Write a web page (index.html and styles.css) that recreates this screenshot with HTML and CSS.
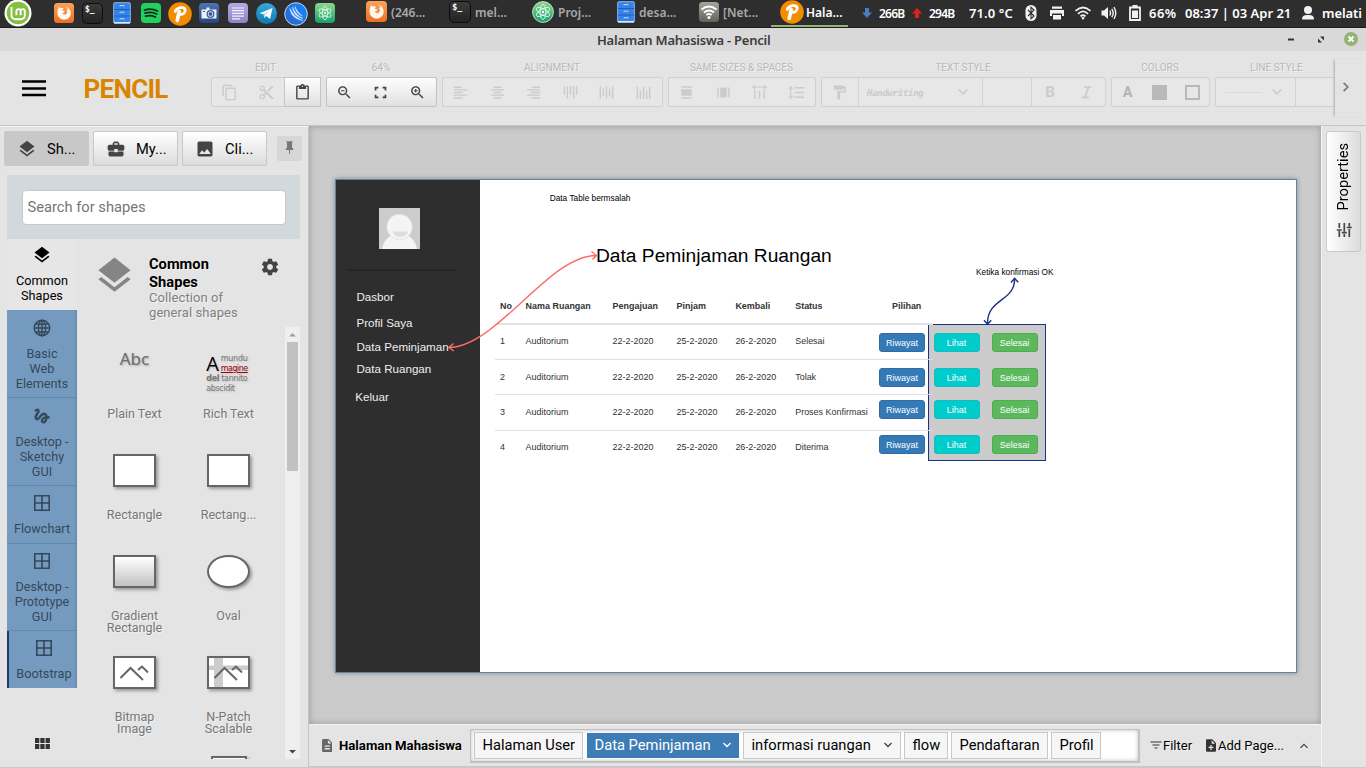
FILE: index.html
```html
<!DOCTYPE html>
<html lang="id">
<head>
<meta charset="utf-8">
<title>Halaman Mahasiswa - Pencil</title>
<link rel="stylesheet" href="styles.css">
</head>
<body>
<svg class="sprite" aria-hidden="true">
  <defs>
    <linearGradient id="g-orange" x1="0" y1="0" x2="0" y2="1"><stop offset="0" stop-color="#fba35a"/><stop offset="1" stop-color="#ee6e22"/></linearGradient>
    <linearGradient id="g-dark" x1="0" y1="0" x2="0" y2="1"><stop offset="0" stop-color="#3c3c3c"/><stop offset="1" stop-color="#222"/></linearGradient>
    <linearGradient id="g-atom" x1="0" y1="0" x2="0" y2="1"><stop offset="0" stop-color="#8ed88c"/><stop offset="1" stop-color="#15a06f"/></linearGradient>
    <linearGradient id="g-tele" x1="0" y1="0" x2="0" y2="1"><stop offset="0" stop-color="#35aadf"/><stop offset="1" stop-color="#0e78b4"/></linearGradient>
    <linearGradient id="g-purple" x1="0" y1="0" x2="0" y2="1"><stop offset="0" stop-color="#b3a9e2"/><stop offset="1" stop-color="#8f83c4"/></linearGradient>
    <linearGradient id="g-camera" x1="0" y1="0" x2="0" y2="1"><stop offset="0" stop-color="#4d74b4"/><stop offset="1" stop-color="#24487f"/></linearGradient>
    <linearGradient id="g-net" x1="0" y1="0" x2="0" y2="1"><stop offset="0" stop-color="#a5a59d"/><stop offset="1" stop-color="#62625c"/></linearGradient>
    <linearGradient id="g-blue" x1="0" y1="1" x2="1" y2="0"><stop offset="0" stop-color="#2f5fd0"/><stop offset="1" stop-color="#0d8cff"/></linearGradient>
  </defs>
  <symbol id="i-firefox" viewBox="0 0 20 20"><rect width="20" height="20" rx="3.500" fill="url(#g-orange)"/><path d="M3.400 10C3.400 7.500 4 5 5.500 3.600c0 1 .4 1.500 1 1.700 1-.5 2-.5 3 0L8.300 7.600l2.700.6-1.200 1.600-1.600.3c.8 1.500 2.600 1.800 4 .8 1.600-1.200 1.400-3.400-.4-4.400 1-.3 1.700 0 2.200.4-.2-1.400-1.100-2.400-2.200-3 3.200.5 5 3.200 5 6.300 0 3.700-2.900 6.500-6.700 6.500S3.400 13.800 3.400 10z" fill="#fff6ee"/></symbol>
  <symbol id="i-cabinet" viewBox="0 0 18 22"><rect x=".7" y=".7" width="16.600" height="20.600" rx="1" fill="#3583e8" stroke="#88b8f2"/><path d="M1 7.500h16M1 14h16" stroke="#1c60bd"/><path d="M7 4.500v-1h4v1M7 11.200v-1h4v1M7 17.700v-1h4v1" stroke="#b8d5fa" fill="none"/><path d="M1 20.700h16" stroke="#e6edf6" stroke-width="1.300"/></symbol>
  <symbol id="i-pencil" viewBox="0 0 24 24"><circle cx="12" cy="12" r="11.800" fill="#f48c00"/><path d="M9.200 18.500 11.200 9.500" fill="none" stroke="#fff" stroke-width="3.600" stroke-linecap="round"/><path d="M7.200 9.500C8.500 5.500 16.500 3.800 17.200 8c.4 3-2.600 4.800-5.200 4.300" fill="none" stroke="#fff" stroke-width="2.800" stroke-linecap="round"/></symbol>
  <symbol id="i-atom" viewBox="0 0 20 20"><rect width="20" height="20" rx="4" fill="url(#g-atom)"/><use href="#i-orbits"/></symbol>
  <symbol id="i-atomround" viewBox="0 0 20 20"><circle cx="10" cy="10" r="9.500" fill="url(#g-atom)" stroke="#c9e9da" stroke-width=".8"/><use href="#i-orbits"/></symbol>
  <symbol id="i-orbits" viewBox="0 0 20 20"><g fill="none" stroke="#e4fbec" stroke-width=".8"><ellipse cx="10" cy="10" rx="2.700" ry="6.800"/><ellipse cx="10" cy="10" rx="2.700" ry="6.800" transform="rotate(60 10 10)"/><ellipse cx="10" cy="10" rx="2.700" ry="6.800" transform="rotate(120 10 10)"/></g><circle cx="10" cy="10" r="1.100" fill="#fff"/></symbol>
  <symbol id="i-layers" viewBox="0 0 24 24"><path d="M11.990 18.540l-7.370-5.730L3 14.070l9 7 9-7-1.630-1.270-7.380 5.740zM12 16l7.360-5.730L21 9l-9-7-9 7 1.630 1.270L12 16z"/></symbol>
  <symbol id="i-window" viewBox="0 0 18 18"><path d="M1.800 1.800h14.400v14.400H1.800zM9 2v14M2 9h14" fill="none" stroke="currentColor" stroke-width="1.600"/></symbol>
  <symbol id="i-down" viewBox="0 0 10 10"><path d="M1.500 3 5 6.500 8.500 3" fill="none" stroke="currentColor" stroke-width="1.400"/></symbol>
</svg>

<header class="taskbar">
  <svg class="ic mint" viewBox="0 0 28 28"><circle cx="14" cy="14" r="13.500" fill="#fff"/><circle cx="14" cy="14" r="11.300" fill="#84bf41"/><path d="M7.500 8v8.200a4 4 0 0 0 4 4h5.300a4 4 0 0 0 4-4v-4a2.100 2.100 0 0 0-4.200 0v4M16.600 12.200a2.100 2.100 0 0 0-4.200 0v4" fill="none" stroke="#fff" stroke-width="1.900"/></svg>
  <svg class="ic s20"><use href="#i-firefox"/></svg>
  <svg class="ic s21" viewBox="0 0 21 21"><rect x=".5" y=".5" width="20" height="20" rx="4" fill="url(#g-dark)" stroke="#0c0c0c"/><text x="3" y="9" class="term-text">$_</text></svg>
  <svg class="ic cab"><use href="#i-cabinet"/></svg>
  <svg class="ic s20" viewBox="0 0 20 20"><rect width="20" height="20" rx="4" fill="#20d160"/><path d="M3.500 7.100c4.500-1.500 9-1.100 13 .9M4 10.200c4-1.200 8-.9 11.600.8M4.600 13.200c3.500-.9 6.700-.6 9.800.8" fill="none" stroke="#0e2b18" stroke-width="1.800" stroke-linecap="round"/></svg>
  <svg class="ic s24"><use href="#i-pencil"/></svg>
  <svg class="ic s20" viewBox="0 0 20 20"><rect width="20" height="20" rx="4" fill="url(#g-camera)"/><path d="M2.500 6.500h5V4.500h3v2h7v9h-15z" fill="#edf1f8"/><circle cx="11.500" cy="11" r="3.300" fill="#edf1f8" stroke="#345b98" stroke-width="1.300"/><rect x="9.700" y="9.200" width="3.500" height="3.500" rx="1" fill="#345b98"/><path d="M4 8.500h2" stroke="#345b98"/></svg>
  <svg class="ic s20" viewBox="0 0 20 20"><rect width="20" height="20" rx="4" fill="url(#g-purple)"/><path d="M4 5h12M4 7.700h12M4 10.400h12M4 13.100h12M4 15.800h8" stroke="#f5f2ff" stroke-width="1.200"/></svg>
  <svg class="ic s21" viewBox="0 0 21 21"><circle cx="10.500" cy="10.500" r="10.500" fill="url(#g-tele)"/><path d="M3.500 10.200 16.500 5l-2.400 11-4-3-2 2-.4-3.700z" fill="#fff"/><path d="m7.700 11.300 6-4.200-4.500 5.200-1 2.500z" fill="#b8d8ea"/></svg>
  <svg class="ic s24" viewBox="0 0 24 24"><circle cx="12" cy="12" r="11.300" fill="url(#g-blue)" stroke="#c3d3ea" stroke-width="1"/><path d="M6 6.500C6.500 13 11 17 18.500 18.500 12.500 16 8.500 12 6 6.500zM8.500 5c.5 6 4 10 10.500 11.500C14 14 10.500 10.500 8.500 5zM11 4.500c.5 4.500 3 8 7.500 9.500C15 11.500 12.500 8.500 11 4.500z" fill="#d8e9ff" stroke="#d8e9ff" stroke-width=".5"/></svg>
  <svg class="ic s20"><use href="#i-atom"/></svg>
  <div class="task"><svg class="ic s21"><use href="#i-firefox"/></svg>(246...</div>
  <div class="task"><svg class="ic s22" viewBox="0 0 21 21"><rect x=".5" y=".5" width="20" height="20" rx="4" fill="url(#g-dark)" stroke="#0c0c0c"/><text x="3" y="9" class="term-text">$_</text></svg>mel...</div>
  <div class="task"><svg class="ic s22"><use href="#i-atomround"/></svg>Proj...</div>
  <div class="task"><svg class="ic cab"><use href="#i-cabinet"/></svg>desa...</div>
  <div class="task"><svg class="ic s20" viewBox="0 0 20 20"><rect width="20" height="20" rx="3.500" fill="url(#g-net)"/><path d="M2.500 7.500Q10 1.500 17.500 7.500M5 10.500Q10 6.500 15 10.500M7.300 13Q10 11 12.700 13" fill="none" stroke="#fff" stroke-width="2"/><circle cx="10" cy="15.500" r="1.600" fill="#fff"/></svg>[Net...</div>
  <div class="task current"><svg class="ic s24"><use href="#i-pencil"/></svg>Hala...</div>
  <svg class="arrow" viewBox="0 0 10 10"><path d="M3 0h4v4.500h3L5 10 0 4.500h3z" fill="#4b7cc0"/></svg>
  <span class="tray small">266B</span>
  <svg class="arrow" viewBox="0 0 10 10"><path d="M3 10h4V5.500h3L5 0 0 5.500h3z" fill="#e02020"/></svg>
  <span class="tray small">294B</span>
  <span class="tray temp">71.0 °C</span>
  <svg class="ti" viewBox="0 0 16 16"><rect x="2.500" y="0" width="11" height="16" rx="5.500" fill="#f2f2f2"/><path d="m5 5 6 6-3 2.700V2.300L11 5l-6 6" fill="none" stroke="#2e2e2e" stroke-width="1.100"/></svg>
  <svg class="ti" viewBox="0 0 16 16"><path d="M3 1.500h10v2.300H3zM1 5h14v6h-2V8.500H3V11H1zM4 10h8v4.500H4z" fill="#f2f2f2"/></svg>
  <svg class="ti" viewBox="0 0 16 16"><path d="M.5 6Q8-1 15.500 6M3 8.800Q8 4 13 8.800M5.500 11.300Q8 9.200 10.500 11.300" fill="none" stroke="#f2f2f2" stroke-width="1.700"/><path d="M6.200 12.500Q8 11.500 9.800 12.500L8 15z" fill="#f2f2f2"/></svg>
  <svg class="ti" viewBox="0 0 16 16"><path d="M.5 5.500H3L7 2v12L3 10.500H.5z" fill="#f2f2f2"/><path d="M8.800 5.500q1.500 2.500 0 5M10.800 3.800q2.800 4.200 0 8.400M13 2q3.500 6 0 12" fill="none" stroke="#f2f2f2" stroke-width="1.400"/></svg>
  <svg class="ti" viewBox="0 0 16 16"><path d="M3 2.500h10V15H3zM5.500 1h5" fill="none" stroke="#f2f2f2" stroke-width="1.800"/><path d="M5 5.500h6V13H5z" fill="#f2f2f2"/></svg>
  <span class="tray pct">66%</span>
  <span class="tray clock">08:37 | 03 Apr 21</span>
  <svg class="ti" viewBox="0 0 16 16"><circle cx="8" cy="5" r="4" fill="#f2f2f2"/><path d="M2 14.500c0-4 2.500-4.500 6-4.500s6 .5 6 4.500z" fill="#f2f2f2"/></svg>
  <span class="tray user">melati</span>
</header>

<div class="titlebar">
  <span class="wtitle">Halaman Mahasiswa - Pencil</span>
  <svg class="wbtns" viewBox="0 0 80 23"><path d="M1 11.500H7" stroke="#333" stroke-width="2"/><path d="M33 8.500h4v4zM31 10.500v4h4z" fill="#333"/><circle cx="64" cy="11" r="7" fill="#93b374"/><path d="m61.500 8.500 5 5m0-5-5 5" stroke="#fff" stroke-width="2"/></svg>
</div>

<div class="toolbar">
  <svg class="burger" viewBox="0 0 24 17"><path d="M0 1.500h24M0 8.500h24M0 15h24" stroke="#000" stroke-width="2.400"/></svg>
  <div class="brand">PENCIL</div>
  <div class="groups">
    <div class="group edit"><div class="glabel">EDIT</div><div class="gbox off">
      <span class="cell"><svg viewBox="0 0 24 24"><path d="M16 1H4c-1.100 0-2 .9-2 2v14h2V3h12V1zm3 4H8c-1.100 0-2 .9-2 2v14c0 1.100.9 2 2 2h11c1.100 0 2-.9 2-2V7c0-1.100-.9-2-2-2zm0 16H8V7h11v14z"/></svg></span>
      <span class="cell"><svg viewBox="0 0 24 24"><path d="M9.640 7.640c.23-.5.36-1.050.36-1.640 0-2.210-1.790-4-4-4S2 3.790 2 6s1.790 4 4 4c.59 0 1.140-.13 1.640-.36L10 12l-2.360 2.360C7.140 14.130 6.590 14 6 14c-2.210 0-4 1.790-4 4s1.790 4 4 4 4-1.790 4-4c0-.59-.13-1.140-.36-1.640L12 14l7 7h3v-1L9.640 7.640zM6 8c-1.100 0-2-.89-2-2s.9-2 2-2 2 .89 2 2-.9 2-2 2zm0 12c-1.100 0-2-.89-2-2s.9-2 2-2 2 .89 2 2-.9 2-2 2zM19 3l-6 6 2 2 7-7V3z"/></svg></span>
      <span class="cell live"><svg viewBox="0 0 24 24"><path d="M19 2h-4.180C14.400.84 13.300 0 12 0c-1.300 0-2.400.84-2.820 2H5c-1.100 0-2 .9-2 2v16c0 1.100.9 2 2 2h14c1.100 0 2-.9 2-2V4c0-1.100-.9-2-2-2zm-7 0c.55 0 1 .45 1 1s-.45 1-1 1-1-.45-1-1 .45-1 1-1zm7 18H5V4h2v3h10V4h2v16z"/></svg></span>
    </div></div>
    <div class="group zoom"><div class="glabel">64%</div><div class="gbox on">
      <span class="cell"><svg viewBox="0 0 24 24"><path d="M15.500 14h-.79l-.28-.27C15.410 12.590 16 11.110 16 9.500 16 5.910 13.090 3 9.500 3S3 5.910 3 9.500 5.910 16 9.500 16c1.610 0 3.090-.59 4.230-1.570l.27.28v.79l5 4.990L20.490 19l-4.990-5zm-6 0C7.010 14 5 11.990 5 9.500S7.010 5 9.500 5 14 7.010 14 9.500 11.990 14 9.500 14zM7 8.700h5v1.600H7z"/></svg></span>
      <span class="cell"><svg viewBox="0 0 24 24"><path d="M5 9V5h4M15 5h4v4M19 15v4h-4M9 19H5v-4" fill="none" stroke="currentColor" stroke-width="2.400"/></svg></span>
      <span class="cell"><svg viewBox="0 0 24 24"><path d="M15.500 14h-.79l-.28-.27C15.410 12.590 16 11.110 16 9.500 16 5.910 13.090 3 9.500 3S3 5.910 3 9.500 5.910 16 9.500 16c1.610 0 3.090-.59 4.230-1.570l.27.28v.79l5 4.990L20.490 19l-4.990-5zm-6 0C7.010 14 5 11.990 5 9.500S7.010 5 9.500 5 14 7.010 14 9.500 11.990 14 9.500 14zM7 8.700h5v1.600H7zM8.700 7h1.600v5H8.700z"/></svg></span>
    </div></div>
    <div class="group align"><div class="glabel">ALIGNMENT</div><div class="gbox off">
      <span class="cell"><svg viewBox="0 0 18 18"><path d="M2 3.500h8M2 6.200h14M2 9h9M2 11.800h14M2 14.800h9" class="ln"/></svg></span>
      <span class="cell"><svg viewBox="0 0 18 18"><path d="M5 3.500h8M2 6.200h14M5 9h8M2 11.800h14M5 14.800h8" class="ln"/></svg></span>
      <span class="cell"><svg viewBox="0 0 18 18"><path d="M7 3.500h9M2 6.200h14M6 9h10M2 11.800h14M7 14.800h9" class="ln"/></svg></span>
      <span class="cell"><svg viewBox="0 0 18 18"><path d="M2.500 2.500v9M5.700 2.500v13M9 2.500v9M12.300 2.500v13M15.500 2.500v9" class="ln"/></svg></span>
      <span class="cell"><svg viewBox="0 0 18 18"><path d="M2.500 2.500v13M5.700 5v8M9 2.500v13M12.300 5v8M15.500 2.500v13" class="ln"/></svg></span>
      <span class="cell"><svg viewBox="0 0 18 18"><path d="M2.500 3v13M5.700 7v9M9 3v13M12.300 7v9M15.500 3v13" class="ln"/></svg></span>
    </div></div>
    <div class="group same"><div class="glabel">SAME SIZES &amp; SPACES</div><div class="gbox off">
      <span class="cell"><svg viewBox="0 0 18 18"><path d="M3.500 5.500h11v7h-11z"/><path d="M3.500 3.200h11M3.500 14.800h11" class="ln"/></svg></span>
      <span class="cell"><svg viewBox="0 0 18 18"><path d="M5.500 3.700h7v10.600h-7z"/><path d="M3.200 3.700v10.600M14.800 3.700v10.600" class="ln"/></svg></span>
      <span class="cell"><svg viewBox="0 0 18 18"><path d="M4 7v9M9 7v9M14 7v9" class="ln"/><path d="M4.500 1.300 2 3.500l2.500 2.200M13.500 1.300 16 3.500l-2.500 2.200M2 3.500h14" class="ln thin"/></svg></span>
      <span class="cell"><svg viewBox="0 0 18 18"><path d="M7 4h10M7 9h10M7 14h10" class="ln"/><path d="M.8 5.500 3 3l2.200 2.500M.8 12.500 3 15l2.200-2.500M3 3v12" class="ln thin"/></svg></span>
    </div></div>
    <div class="group text"><div class="glabel">TEXT STYLE</div><div class="gbox off">
      <span class="cell"><svg viewBox="0 0 24 24"><path d="M18 4V3c0-.55-.45-1-1-1H5c-.55 0-1 .45-1 1v4c0 .55.45 1 1 1h12c.55 0 1-.45 1-1V6h1v4H9v11c0 .55.45 1 1 1h2c.55 0 1-.45 1-1v-9h8V4h-3z"/></svg></span>
      <span class="cell font"><i>Handwriting</i><svg><use href="#i-down"/></svg></span>
      <span class="cell size"></span>
      <span class="cell biu">B</span>
      <span class="cell"><svg viewBox="0 0 24 24"><path d="M9 4.500h10M5 19h10M14.500 5l-4.500 14" fill="none" stroke="currentColor" stroke-width="2.600"/></svg></span>
    </div></div>
    <div class="group color"><div class="glabel">COLORS</div><div class="gbox off colors">
      <span class="cell">A</span><span class="cell"><b class="fill"></b></span><span class="cell"><b class="hollow"></b></span>
    </div></div>
    <div class="group"><div class="glabel">LINE STYLE</div><div class="gbox off">
      <span class="cell stroke"><i></i><svg><use href="#i-down"/></svg></span><span class="cell width"></span>
    </div></div>
  </div>
  <div class="more"><svg viewBox="0 0 10 10"><path d="M3 1.500 6.500 5 3 8.500" fill="none" stroke="#777" stroke-width="1.400"/></svg></div>
</div>

<main class="main">
  <aside class="left">
    <div class="tabs">
      <div class="tab sel"><svg><use href="#i-layers"/></svg>Sh...</div>
      <div class="tab"><svg viewBox="0 0 24 24"><path d="M10 16v-1H3.010L3 19c0 1.110.89 2 2 2h14c1.110 0 2-.89 2-2v-4h-7v1h-4zm10-9h-4.010V5l-2-2h-4l-2 2v2H4c-1.100 0-2 .9-2 2v3c0 1.110.89 2 2 2h6v-2h4v2h6c1.100 0 2-.9 2-2V9c0-1.100-.9-2-2-2zm-6 0h-4V5h4v2z"/></svg>My...</div>
      <div class="tab"><svg viewBox="0 0 24 24"><path d="M21 19V5c0-1.100-.9-2-2-2H5c-1.100 0-2 .9-2 2v14c0 1.100.9 2 2 2h14c1.100 0 2-.9 2-2zM8.500 13.500l2.500 3.010L14.500 12l4.500 6H5l3.500-4.500z"/></svg>Cli...</div>
      <div class="pin"><svg viewBox="0 0 24 24"><path d="M16,12V4H17V2H7V4H8V12L6,14V16H11.200V22H12.800V16H18V14L16,12Z"/></svg></div>
    </div>
    <div class="search"><div class="field">Search for shapes</div></div>
    <div class="library">
      <nav class="cats">
        <div class="cat active"><svg><use href="#i-layers"/></svg>Common<br>Shapes</div>
        <div class="cat"><svg viewBox="0 0 18 18"><g fill="none" stroke="currentColor" stroke-width="1.400"><circle cx="9" cy="9" r="7.800"/><ellipse cx="9" cy="9" rx="3.600" ry="7.800"/><path d="M9 1v16M1 9h16M2.500 5h13M2.500 13h13"/></g></svg>Basic<br>Web<br>Elements</div>
        <div class="cat"><svg viewBox="1 1 22 22"><path d="M4.590 6.890c.7-.71 1.400-1.350 1.710-1.220.5.2 0 1.030-.3 1.520-.25.42-2.860 3.890-2.860 6.310 0 1.280.48 2.340 1.340 2.980.75.56 1.740.73 2.640.46 1.070-.31 1.950-1.400 3.060-2.770 1.210-1.490 2.830-3.440 4.080-3.440 1.630 0 1.650 1.010 1.760 1.790-3.780.64-5.380 3.670-5.380 5.370 0 1.700 1.440 3.090 3.210 3.090 1.630 0 4.290-1.330 4.690-6.100H21v-2.500h-2.470c-.15-1.650-1.090-4.200-4.030-4.200-2.250 0-4.180 1.910-4.940 2.840-.58.73-2.060 2.480-2.290 2.720-.25.3-.68.84-1.110.84-.45 0-.72-.83-.36-1.920.35-1.090 1.400-2.860 1.850-3.520.78-1.140 1.300-1.920 1.300-3.280C8.950 3.690 7.310 3 6.440 3 5.120 3 3.970 4 3.720 4.250c-.36.36-.66.66-.88.93l1.750 1.710zm9.290 11.660c-.31 0-.74-.26-.74-.72 0-.6.73-2.200 2.870-2.760-.3 2.690-1.430 3.480-2.130 3.480z" stroke="currentColor" stroke-width=".5"/></svg>Desktop -<br>Sketchy<br>GUI</div>
        <div class="cat short"><svg><use href="#i-window"/></svg>Flowchart</div>
        <div class="cat"><svg><use href="#i-window"/></svg>Desktop -<br>Prototype<br>GUI</div>
        <div class="cat marked"><svg><use href="#i-window"/></svg>Bootstrap</div>
        <svg class="apps" viewBox="0 0 15 11"><path d="M0 0h4.300v5H0zM5.300 0h4.300v5H5.300zM10.600 0h4.300v5h-4.300zM0 6h4.300v5H0zM5.300 6h4.300v5H5.300zM10.600 6h4.300v5h-4.300z"/></svg>
      </nav>
      <section class="shapes">
        <div class="head">
          <svg class="big"><use href="#i-layers"/></svg>
          <div class="desc"><h2>Common Shapes</h2><p>Collection of general shapes</p></div>
          <svg class="gear" viewBox="0 0 24 24"><path d="M19.430 12.980c.04-.32.07-.64.07-.98s-.03-.66-.07-.98l2.110-1.650c.19-.15.24-.42.12-.64l-2-3.460c-.12-.22-.39-.3-.61-.22l-2.490 1c-.52-.4-1.080-.73-1.690-.98l-.38-2.650C14.460 2.180 14.250 2 14 2h-4c-.25 0-.46.18-.49.42l-.38 2.650c-.61.25-1.170.59-1.690.98l-2.490-1c-.23-.09-.49 0-.61.22l-2 3.460c-.13.22-.07.49.12.64l2.110 1.650c-.04.32-.07.65-.07.98s.03.66.07.98l-2.110 1.650c-.19.15-.24.42-.12.64l2 3.460c.12.22.39.3.61.22l2.490-1c.52.4 1.080.73 1.690.98l.38 2.650c.03.24.24.42.49.42h4c.25 0 .46-.18.49-.42l.38-2.650c.61-.25 1.170-.59 1.690-.98l2.490 1c.23.09.49 0 .61-.22l2-3.460c.12-.22.07-.49-.12-.64l-2.110-1.650zM12 15.500c-1.930 0-3.500-1.570-3.500-3.500s1.570-3.500 3.500-3.500 3.500 1.570 3.500 3.500-1.570 3.500-3.500 3.500z"/></svg>
        </div>
        <div class="scroller">
          <div class="grid">
            <div class="shape"><div class="thumb plain">Abc</div>Plain Text</div>
            <div class="shape"><div class="thumb rich"><b>A</b><div><span>mundu</span><u>magine</u></div><p><strong>del</strong> tannito</p><p>abscidit</p></div>Rich Text</div>
            <div class="shape"><div class="thumb"><i class="rect"></i></div>Rectangle</div>
            <div class="shape"><div class="thumb"><i class="rect"></i></div>Rectang...</div>
            <div class="shape"><div class="thumb"><i class="rect grad"></i></div>Gradient<br>Rectangle</div>
            <div class="shape"><div class="thumb"><i class="rect oval"></i></div>Oval</div>
            <div class="shape"><div class="thumb"><i class="rect"><svg viewBox="0 0 39 29"><path d="M5.500 20 15.500 10 28 22M23 12l4-3.500 6 6" class="mt"/></svg></i></div>Bitmap<br>Image</div>
            <div class="shape"><div class="thumb"><i class="rect"><svg viewBox="0 0 39 29"><path d="M5 0h9v29H5zM0 7.500h39v4.500H0z" fill="#999" opacity=".5"/><path d="M5.500 20 15.500 10 28 22M23 12l4-3.500 6 6" class="mt"/></svg></i></div>N-Patch<br>Scalable</div>
            <div class="shape"></div>
            <div class="shape"><div class="thumb"><i class="rect narrow"></i></div></div>
          </div>
          <div class="bar"><svg viewBox="0 0 15 15"><path d="M4 9.500h7L7.500 6z" fill="#a0a0a0"/></svg><i></i><svg viewBox="0 0 15 15"><path d="M4 6h7L7.500 9.500z" fill="#444"/></svg></div>
        </div>
      </section>
    </div>
  </aside>

  <section class="center">
    <div class="stage">
      <div class="page">
        <div class="side">
          <svg class="avatar" viewBox="0 0 41 41"><rect width="41" height="41" fill="#ccc"/><path d="M3 41c2-11 9-15 17.500-15S36 30 38 41z" fill="#f4f4f4"/><circle cx="20.500" cy="19" r="12.800" fill="#f4f4f4" stroke="#dcdcdc" stroke-width=".6"/><path d="M13.500 23.500h15.500c-2 7-13.500 7-15.500 0z" fill="#ddd"/></svg>
          <hr>
          <ul><li>Dasbor</li><li>Profil Saya</li><li>Data Peminjaman</li><li>Data Ruangan</li><li>Keluar</li></ul>
        </div>
        <div class="note n1">Data Table bermsalah</div>
        <h1>Data Peminjaman Ruangan</h1>
        <div class="note n2">Ketika konfirmasi OK</div>
        <div class="panel"></div>
        <div class="table">
          <div class="tr th"><span>No</span><span>Nama Ruangan</span><span>Pengajuan</span><span>Pinjam</span><span>Kembali</span><span>Status</span><span>Pilihan</span></div>
          <div class="tr"><span>1</span><span>Auditorium</span><span>22-2-2020</span><span>25-2-2020</span><span>26-2-2020</span><span>Selesai</span></div>
          <div class="tr"><span>2</span><span>Auditorium</span><span>22-2-2020</span><span>25-2-2020</span><span>26-2-2020</span><span>Tolak</span></div>
          <div class="tr"><span>3</span><span>Auditorium</span><span>22-2-2020</span><span>25-2-2020</span><span>26-2-2020</span><span>Proses Konfirmasi</span></div>
          <div class="tr last"><span>4</span><span>Auditorium</span><span>22-2-2020</span><span>25-2-2020</span><span>26-2-2020</span><span>Diterima</span></div>
        </div>
        <div class="actions">
          <a class="blue">Riwayat</a><a class="cyan">Lihat</a><a class="green">Selesai</a>
          <a class="blue">Riwayat</a><a class="cyan">Lihat</a><a class="green">Selesai</a>
          <a class="blue">Riwayat</a><a class="cyan">Lihat</a><a class="green">Selesai</a>
          <a class="blue">Riwayat</a><a class="cyan">Lihat</a><a class="green">Selesai</a>
        </div>
        <svg class="links" viewBox="336 180 960 492">
          <g fill="none" stroke="#fd6c6c" stroke-width="1.400"><path d="M449 347.500C498 346 548 256 596 255.500M453.500 343.500l-4.700 4 5 3.500M591.500 251.500l5 4-4 4"/></g>
          <g fill="none" stroke="#1b3282" stroke-width="1.400"><path d="M1014.600 278.500C1015 302 987 298 987.500 324M1011 282.500l3.600-4.200 3.600 4M984 320.300l3.500 4 3.700-4"/></g>
        </svg>
      </div>
    </div>
    <footer class="pages">
      <svg class="doc" viewBox="4 2 16 20"><path d="M14 2H6c-1.100 0-1.990.9-1.990 2L4 20c0 1.100.89 2 1.990 2H18c1.100 0 2-.9 2-2V8l-6-6zm2 16H8v-2h8v2zm0-4H8v-2h8v2zm-3-5V3.500L18.500 9H13z"/></svg>
      <b class="parent">Halaman Mahasiswa</b>
      <div class="list">
        <span class="w1">Halaman User</span><span class="w2 cur">Data Peminjaman<svg><use href="#i-down"/></svg></span><span class="w3">informasi ruangan<svg><use href="#i-down"/></svg></span><span class="w4">flow</span><span class="w5">Pendaftaran</span><span class="w6">Profil</span>
      </div>
      <div class="act filter"><svg viewBox="0 0 12 10"><path d="M.5 2h11M2.500 5h7M4.500 8h3" stroke="#333" stroke-width="1.200"/></svg>Filter</div>
      <div class="act add"><svg viewBox="4 2 16 20"><path d="M14 2H6c-1.100 0-1.990.9-1.990 2L4 20c0 1.100.89 2 1.990 2H18c1.100 0 2-.9 2-2V8l-6-6zm2 14h-3v3h-2v-3H8v-2h3v-3h2v3h3v2zm-3-7V3.500L18.500 9H13z"/></svg>Add Page...</div>
      <svg class="up" viewBox="0 0 10 10"><path d="M1.500 6.800 5 3.300 8.500 6.800" fill="none" stroke="#444" stroke-width="1.200"/></svg>
    </footer>
  </section>

  <aside class="right">
    <div class="props"><svg viewBox="0 0 16 16"><path d="M1 3.300h6M10 3.300h5M8 .8v5M1 8.300h3M6.500 8.300H15M5.300 5.800v5M1 13.300h8M11.500 13.300H15M10.500 10.800v5" stroke="#444" stroke-width="1.700"/></svg><span>Properties</span></div>
  </aside>
</main>
</body>
</html>
```

FILE: styles.css
```css
* { box-sizing: border-box; }
html, body { margin: 0; height: 100%; overflow: hidden; }
body { width: 1366px; height: 768px; display: flex; flex-direction: column; background: #e4e4e4; font-family: Roboto, sans-serif; color: #000; }
svg { display: block; fill: currentColor; flex: none; }
.sprite { position: absolute; width: 0; height: 0; }
.term-text { font: bold 8px "DejaVu Sans Mono", monospace; fill: #fff; }

/* desktop taskbar */
.taskbar { height: 28px; background: #2e2e2e; border-bottom: 1px solid #1d1d1d; display: grid; align-items: center; padding-left: 4px;
  grid-template-columns: 50px 28px 31px 28px 27px 31px 29px 28px 28px 31px 51px 83px 83px 85px 82px 73px 90px 17px 33px 17px 40px 54px 26px 26px 26px 26px 22px 36px 115px 22px 44px;
  font-family: "Noto Sans", sans-serif; font-weight: 600; font-size: 13px; color: #a9a9a9; white-space: nowrap; }
.mint { width: 28px; height: 28px; margin-top: -2px; }
.s20 { width: 20px; height: 20px; margin-top: -1px; }
.s21 { width: 21px; height: 21px; margin-top: -1px; }
.s22 { width: 22px; height: 22px; }
.s24 { width: 24px; height: 24px; }
.cab { width: 18px; height: 22px; margin-top: -1px; }
.task { height: 27px; display: flex; align-items: center; gap: 4px; font-size: 12px; padding-bottom: 3px; }
.task.current { color: #fff; width: 77px; margin-left: -1px; padding-left: 9px; gap: 2px; border-bottom: 2px solid #93b374; padding-bottom: 1px; }
.arrow { width: 10px; height: 10px; margin-top: -2px; }
.tray { color: #fff; margin-top: -1px; }
.small { font-size: 12px; letter-spacing: -.8px; }
.temp { letter-spacing: .1px; }
.pct { letter-spacing: .5px; }
.clock { letter-spacing: 0; }
.user { letter-spacing: -.1px; }
.ti { width: 16px; height: 16px; margin-top: -1px; }

/* window title */
.titlebar { height: 23px; background: #d9d9d9; display: flex; align-items: center; justify-content: flex-end; padding-left: 597px; }
.wtitle { flex: 1; font: 600 13px "Noto Sans", sans-serif; letter-spacing: -.24px; color: #3c3c3c; white-space: nowrap; }
.wbtns { width: 80px; height: 23px; margin-right: -1px; }

/* application toolbar */
.toolbar { height: 74px; display: flex; align-items: flex-start; background: #e4e4e4; }
.burger { width: 24px; height: 17px; margin: 29px 0 0 22px; }
.brand { width: 127px; margin: 23px 0 0 37.500px; font-weight: 700; font-size: 26px; line-height: 30px; letter-spacing: -.7px; color: #d98500; }
.groups { width: 1124px; display: flex; gap: 5px; overflow: hidden; padding-top: 10px; }
.group { flex: none; }
.edit { width: 110px; }
.zoom { width: 111px; }
.align { width: 221px; }
.same { width: 148px; }
.text { width: 285px; }
.color { width: 99px; }
.glabel { height: 16px; line-height: 14px; text-align: center; font-size: 10px; color: #b9b9b9; text-shadow: 1px 1px #f2f2f2; white-space: nowrap; }
.gbox { height: 30px; display: flex; border: 1px solid #d0d0d0; border-radius: 2px; color: #cbcbcb; background: #e7e7e7; }
.gbox.on, .cell.live { background: linear-gradient(#fdfdfd, #e0e0e0); color: #444; border-color: #c2c2c2; }
.cell { flex: 1 1 36px; min-width: 0; display: flex; align-items: center; justify-content: center; }
.cell.live { margin: -1px; border: 1px solid #c4c4c4; }
.cell svg { width: 17px; height: 17px; }
.ln { stroke: currentColor; stroke-width: 1.500; fill: none; }
.thin { stroke-width: 1.200; }
.font { flex: 0 0 125px; justify-content: space-between; padding: 0 13px 0 8px; border-left: 1px solid #d3d3d3; border-right: 1px solid #d3d3d3; }
.font i { font: italic bold 9.500px "DejaVu Sans Mono", monospace; letter-spacing: -.6px; }
.cell.font svg, .cell.stroke svg { width: 12px; height: 12px; }
.size { flex: 0 0 49px; border-right: 1px solid #d3d3d3; }
.biu { font-weight: 700; font-size: 15px; }
.colors .cell { color: #b3b3b3; font-weight: 700; font-size: 14px; }
.fill { width: 15px; height: 15px; background: #b9b9b9; }
.hollow { width: 15px; height: 15px; border: 2px solid #b9b9b9; }
.stroke { flex: 0 0 80px; justify-content: space-between; padding: 0 12px 0 9px; border-right: 1px solid #d3d3d3; }
.stroke i { width: 37px; height: 1px; background: #dadada; }
.width { flex: 0 0 42px; }
.more { width: 31px; height: 58px; margin-top: 8px; display: flex; align-items: center; padding: 0 0 2px 5px; box-shadow: -2px 0 2px -1px #aaa; background: #e4e4e4; }
.more svg { width: 12px; height: 12px; }

/* three columns */
.main { flex: 1; min-height: 0; display: grid; grid-template-columns: 309px 1012px 45px; border-top: 1px solid #c6c6c6; border-bottom: 1px solid #c9c9c9; }
.left { min-height: 0; border-top: 1px solid #f4f4f4; border-right: 1px solid #c4c4c4; display: flex; flex-direction: column; }
.tabs { display: flex; gap: 4px; padding: 4px 0 9px 4px; align-items: center; }
.tab { width: 85px; height: 35px; border: 1px solid #c8c8c8; border-radius: 2px; background: linear-gradient(#fff, #dcdcdc); display: flex; align-items: center; gap: 10px; padding-left: 12px; font-size: 14.700px; }
.tab svg { width: 20px; height: 20px; color: #444; }
.tab.sel { background: #c8c8c8; }
.pin { margin-left: 6px; width: 25px; height: 25px; border-radius: 2px; background: #d6d6d6; display: flex; align-items: center; justify-content: center; color: #777; }
.pin svg { width: 15px; height: 15px; margin-top: -3px; }
.search { height: 64px; margin: 0 8px 0 7px; padding: 15px; background: #d1d9dc; }
.field { height: 35px; width: 264px; border: 1px solid #c8c8c8; border-radius: 4px; background: #fff; font-size: 14.700px; line-height: 32px; padding-left: 4.500px; color: #757575; }
.library { flex: 1; min-height: 0; display: flex; padding-left: 7px; }
.cats { width: 70px; display: flex; flex-direction: column; background: #e4e4e4; }
.cat { flex: none; height: 88px; padding-top: 9px; text-align: center; font-size: 12.700px; line-height: 15px; color: #35485a; background: #749bbf; border-bottom: 1px solid #6388aa; box-shadow: inset -3px 0 3px -3px #47698a; white-space: nowrap; }
.cat svg { width: 18px; height: 18px; margin: 0 auto 9px; }
.cat + .cat + .cat { height: 87.500px; padding-top: 8.500px; }
.cat.active { height: 71px; padding-top: 6px; background: #e6e6e6; color: #000; border: 0; box-shadow: none; }
.cat.active svg { width: 20px; height: 20px; margin-bottom: 8px; }
.cat + .cat.short { height: 58px; padding-top: 8px; }
.cat + .cat.marked { height: 57px; padding-top: 8px; border-bottom: 0; border-left: 2px solid #1f3f63; padding-left: 2px; }
.apps { width: 15px; height: 11px; margin: 50px 0 0 28px; color: #333; }
.shapes { flex: 1; min-width: 0; display: flex; flex-direction: column; text-shadow: 1px 1px #f2f2f2; }
.head { height: 88px; display: flex; align-items: flex-start; }
.big { width: 43px; height: 43px; margin: 15px 0 0 15.500px; color: #858585; }
.desc { width: 104px; margin: 15.500px 0 0 13.500px; }
.desc h2 { margin: 0; font-size: 14.700px; line-height: 18px; font-weight: 700; }
.desc p { margin: -1px 0 0; font-size: 13px; line-height: 15px; letter-spacing: .08px; color: #808080; white-space: normal; }
.gear { width: 20px; height: 20px; margin: 18px 0 0 7px; color: #444; }
.scroller { flex: 1; min-height: 0; max-height: 432px; overflow: hidden; display: flex; }
.grid { width: 208px; display: grid; grid-template-columns: 94px 94px; grid-auto-rows: 101px; padding: 5px 0 0 10.500px; overflow: hidden; align-content: start; }
.shape { text-align: center; font-size: 12.500px; line-height: 12px; color: #777; }
.thumb { height: 60px; margin: 7px 0 8.500px; display: flex; align-items: center; justify-content: center; line-height: 10px; }
.rect { width: 43px; height: 33px; border: 2px solid #666; background: #fff; box-shadow: 2px 2px 3px #999; }
.rect svg { width: 39px; height: 29px; }
.grad { background: linear-gradient(#fff, #c2c2c2); }
.oval { border-radius: 50%; }
.narrow { width: 36px; height: 42px; margin-top: 8px; }
.mt { fill: none; stroke: #666; stroke-width: 2; }
.plain { font: 17px "Noto Sans", sans-serif; color: #6d6d6d; padding-bottom: 22px; text-shadow: 1px 1px 2px #aaa; }
.thumb.rich { display: grid; grid-template-columns: 14.500px 30px; align-content: center; text-align: left; font: 8px/10px "DejaVu Sans", sans-serif; color: #777; padding-top: 10px; letter-spacing: -.25px; text-shadow: 1px 1px 2px #bbb; white-space: nowrap; }
.rich b { font: 20px/20px "Open Sans", sans-serif; color: #000; }
.rich span, .rich u { display: block; }
.rich u { color: #a00010; letter-spacing: -.5px; }
.rich p { margin: 0; grid-column: 1 / 3; letter-spacing: -.35px; }
.bar { width: 15px; background: #efefef; display: flex; flex-direction: column; }
.bar svg { width: 15px; height: 15px; }
.bar i { width: 11px; height: 129px; margin: 0 2px auto; background: #c1c1c1; }

/* drawing stage */
.center { display: flex; flex-direction: column; min-width: 0; }
.stage { position: relative; height: 598px; background: #cbcbcb; box-shadow: inset 0 0 7px #999; }
.page { position: absolute; left: 26px; top: 53px; width: 962px; height: 494px; border: 1px solid #5a84ad; background: #fff; box-shadow: 0 0 5px #888; font-family: "Liberation Sans", Arial, sans-serif; }
.side { width: 144px; height: 492px; background: #2e2e2e; color: #eee; padding-top: 27.500px; }
.avatar { width: 41px; height: 41px; margin-left: 43px; }
.side hr { width: 109px; margin: 20.500px 0 0 11px; border: 0; border-top: 2px solid #252525; }
.side ul { list-style: none; margin: 16px 0 0; padding: 0 0 0 20.500px; font-size: 11.600px; line-height: 20px; white-space: nowrap; }
.side li:nth-child(2) { margin-top: 6px; }
.side li:nth-child(3) { margin-top: 4px; }
.side li:nth-child(4) { margin-top: 2px; }
.side li:nth-child(5) { margin: 8px 0 0 -1.200px; }
.note { position: absolute; font-size: 8.320px; line-height: 10px; white-space: nowrap; }
.n1 { left: 213.700px; top: 13px; }
.n2 { left: 640px; top: 87px; }
.page h1 { position: absolute; left: 260px; top: 65px; margin: 0; font-weight: 400; font-size: 19.200px; line-height: 22px; white-space: nowrap; }
.panel { position: absolute; left: 592px; top: 144px; width: 118px; height: 137px; background: #cbcbcb; border: 1.300px solid #1b3282; }
.table { position: absolute; left: 159px; top: 108px; width: 438px; font-size: 8.960px; color: #333; }
.tr { height: 35.200px; display: grid; grid-template-columns: 25.600px 87px 64px 58.800px 59.800px 96.800px 1fr; align-items: center; padding: 0 0 0 5px; border-bottom: 1px solid rgba(222, 222, 222, .9); white-space: nowrap; }
.th { height: 37px; font-weight: 700; border-bottom: 2px solid #e3e3e3; }
.th + .tr, .tr.last { padding-bottom: 2px; }
.last { border: 0; }
.actions { position: absolute; left: 543px; top: 153px; display: grid; grid-template-columns: 46px 46px 46px; column-gap: 8.500px; grid-template-rows: 35px 32px 35px 18px; }
.actions .green { margin-left: 3.500px; margin-right: -3.500px; }
.actions a { height: 18.500px; border-radius: 3px; border: 1px solid; color: #fff; font-size: 8.960px; line-height: 18px; text-align: center; }
.actions .blue { background: #337ab7; border-color: #2e6da4; }
.actions .cyan { background: #0cc; border-color: #16bcbc; }
.actions .green { background: #5cb85c; border-color: #4cae4c; }
.links { position: absolute; left: 0; top: 0; width: 960px; height: 492px; }

/* page strip */
.pages { flex: 1; display: flex; align-items: center; border-top: 1px solid #f6f6f6; border-bottom: 1px solid #c9c9c9; padding-left: 12.500px; text-shadow: 1px 1px #f2f2f2; white-space: nowrap; }
.doc { width: 10.500px; height: 13px; margin-top: -1px; color: #666; }
.parent { width: 131px; margin-left: 7px; font-size: 13.200px; }
.list { width: 670px; height: 34px; border: 2px solid #c2c2c2; border-width: 1px 2px 2px 1px; background: #fff; box-shadow: inset 0 0 4px #bbb; display: flex; align-items: center; gap: 3px; padding-left: 3px; font-size: 14.700px; text-shadow: none; }
.list span { height: 27px; line-height: 24px; border: 1px solid #c8c8c8; background: #f6f6f6; padding-left: 7.500px; display: flex; justify-content: space-between; align-items: center; padding-right: 6px; }
.list svg { width: 10px; height: 10px; color: #444; margin-right: 1px; }
.list .cur { height: 25px; background: #3e7cb6; border: 0; color: #fff; margin: 0 1px; }
.list .cur svg { color: #fff; }
.w1 { width: 109px; } .w2 { width: 152px; } .w3 { width: 158px; } .w4 { width: 44px; } .w5 { width: 97px; } .w6 { width: 50px; }
.act { display: flex; align-items: center; font-size: 13px; padding-bottom: 1px; }
.filter { width: 56px; margin-left: 10px; gap: 1px; }
.filter svg { width: 12px; height: 10px; }
.add { width: 93px; gap: 2px; }
.add svg { width: 10px; height: 13px; color: #333; }
.up { width: 10px; height: 10px; }

.right { border-left: 1px solid #f4f4f4; padding: 5px 0 0 4px; }
.props { width: 35px; height: 121px; border: 1px solid #c8c8c8; border-radius: 3px; background: linear-gradient(90deg, #fff, #dcdcdc); display: flex; flex-direction: column-reverse; align-items: center; justify-content: flex-start; padding-bottom: 13px; gap: 11px; }
.props svg { width: 16px; height: 16px; transform: rotate(-90deg); }
.props span { writing-mode: vertical-rl; transform: rotate(180deg); font-size: 14.700px; line-height: 17px; }
```
